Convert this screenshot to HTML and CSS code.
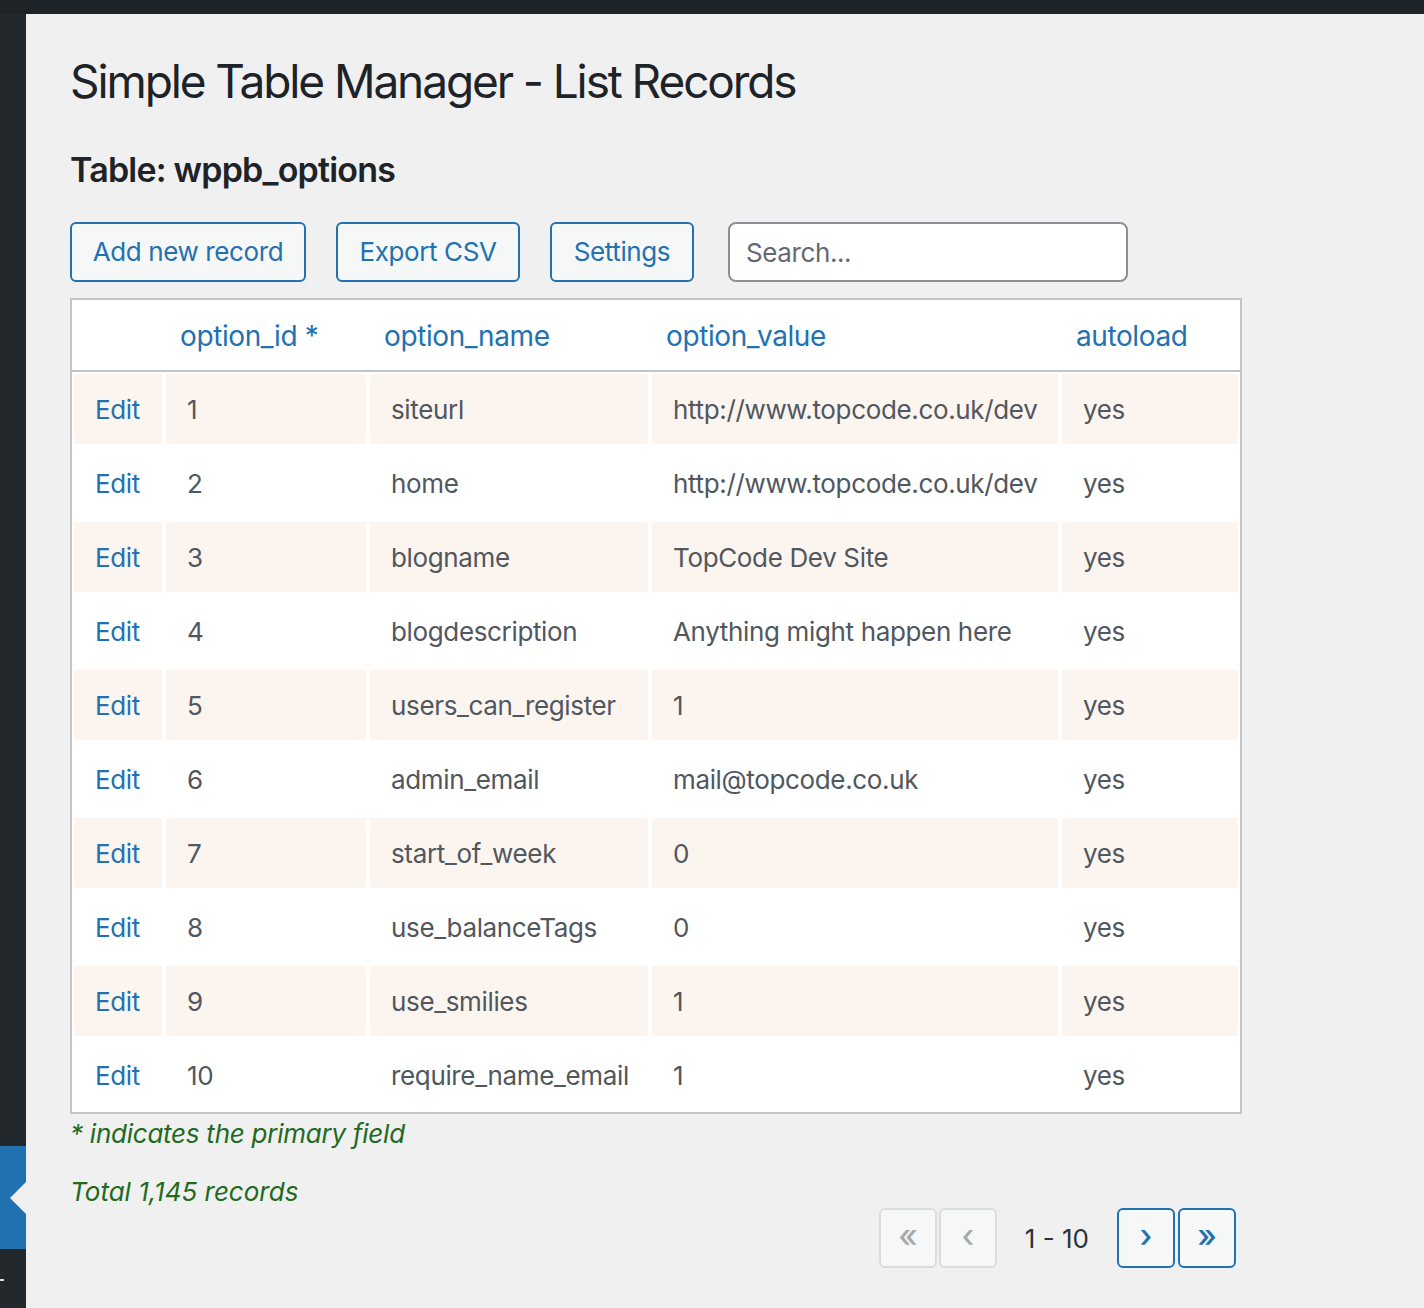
FILE: index.html
```html
<!DOCTYPE html>
<html lang="en">
<head>
<meta charset="utf-8">
<title>Simple Table Manager - List Records</title>
<link rel="stylesheet" href="styles.css">
</head>
<body>
<div class="topbar"></div>
<div class="layout">
  <aside class="sidebar">
    <div class="menu-current"><span class="menu-arrow"></span></div>
    <div class="menu-mark"></div>
  </aside>
  <main class="content">
    <h1 class="page-title">Simple Table Manager - List Records</h1>
    <h2 class="table-title">Table: wppb_options</h2>
    <div class="toolbar">
      <button class="btn btn-add">Add new record</button>
      <button class="btn btn-export">Export CSV</button>
      <button class="btn btn-settings">Settings</button>
      <input class="search" type="text" placeholder="Search...">
    </div>
    <div class="records">
      <div class="row head">
        <div class="th"></div>
        <div class="th">option_id *</div>
        <div class="th">option_name</div>
        <div class="th">option_value</div>
        <div class="th">autoload</div>
      </div>
      <div class="body">
        <div class="row alt"><div class="td edit">Edit</div><div class="td">1</div><div class="td">siteurl</div><div class="td">http://www.topcode.co.uk/dev</div><div class="td">yes</div></div>
        <div class="row"><div class="td edit">Edit</div><div class="td">2</div><div class="td">home</div><div class="td">http://www.topcode.co.uk/dev</div><div class="td">yes</div></div>
        <div class="row alt"><div class="td edit">Edit</div><div class="td">3</div><div class="td">blogname</div><div class="td">TopCode Dev Site</div><div class="td">yes</div></div>
        <div class="row"><div class="td edit">Edit</div><div class="td">4</div><div class="td">blogdescription</div><div class="td">Anything might happen here</div><div class="td">yes</div></div>
        <div class="row alt"><div class="td edit">Edit</div><div class="td">5</div><div class="td">users_can_register</div><div class="td">1</div><div class="td">yes</div></div>
        <div class="row"><div class="td edit">Edit</div><div class="td">6</div><div class="td">admin_email</div><div class="td">mail@topcode.co.uk</div><div class="td">yes</div></div>
        <div class="row alt"><div class="td edit">Edit</div><div class="td">7</div><div class="td">start_of_week</div><div class="td">0</div><div class="td">yes</div></div>
        <div class="row"><div class="td edit">Edit</div><div class="td">8</div><div class="td">use_balanceTags</div><div class="td">0</div><div class="td">yes</div></div>
        <div class="row alt"><div class="td edit">Edit</div><div class="td">9</div><div class="td">use_smilies</div><div class="td">1</div><div class="td">yes</div></div>
        <div class="row"><div class="td edit">Edit</div><div class="td">10</div><div class="td">require_name_email</div><div class="td">1</div><div class="td">yes</div></div>
      </div>
    </div>
    <p class="note">* indicates the primary field</p>
    <p class="note total">Total 1,145 records</p>
    <div class="pager">
      <span class="pg disabled">&laquo;</span>
      <span class="pg disabled gap-s">&lsaquo;</span>
      <span class="pg-label">1 - 10</span>
      <span class="pg active">&rsaquo;</span>
      <span class="pg active gap-m">&raquo;</span>
    </div>
  </main>
</div>
</body>
</html>
```

FILE: styles.css
```css
html, body {
  margin: 0;
  padding: 0;
  background: #f0f0f1;
  font-family: Inter, "Noto Sans", sans-serif;
  color: #3c434a;
}

.topbar {
  height: 14px;
  background: #1d2327;
}

.layout {
  display: flex;
  min-height: 1294px;
}

.sidebar {
  width: 26px;
  flex: none;
  background: #23282d;
  display: flex;
  flex-direction: column;
}

.menu-current {
  position: relative;
  margin-top: 1132px;
  height: 103px;
  background: #2271b1;
}

.menu-arrow {
  position: absolute;
  right: 0;
  top: 36px;
  width: 0;
  height: 0;
  border-top: 16px solid transparent;
  border-bottom: 16px solid transparent;
  border-right: 16px solid #f0f0f1;
}

.menu-mark {
  margin-top: 30px;
  width: 4px;
  height: 2px;
  background: #dcdcde;
}

.content {
  flex: 1;
  padding: 40px 0 0 44px;
}

.page-title {
  margin: 0;
  font-size: 46px;
  font-weight: 400;
  line-height: 55px;
  color: #1d2327;
  letter-spacing: -2.1px;
}

.table-title {
  margin: 41px 0 0;
  font-size: 34px;
  font-weight: 600;
  line-height: 40px;
  color: #1d2327;
  letter-spacing: -0.8px;
}

.toolbar {
  display: flex;
  align-items: center;
  margin-top: 32px;
  height: 60px;
}

.btn {
  box-sizing: border-box;
  height: 60px;
  padding: 0;
  margin-right: 30px;
  border: 2px solid #2271b1;
  border-radius: 6px;
  background: #f6f7f7;
  color: #2271b1;
  font-family: inherit;
  font-size: 26px;
  line-height: 56px;
  letter-spacing: -0.4px;
  text-align: center;
}

.btn-add { width: 236px; }
.btn-export { width: 184px; }
.btn-settings { width: 144px; margin-right: 34px; }

.search {
  box-sizing: border-box;
  width: 400px;
  height: 60px;
  padding: 0 16px;
  border: 2px solid #8c8f94;
  border-radius: 8px;
  background: #fff;
  font-family: inherit;
  font-size: 26px;
  letter-spacing: -0.4px;
  color: #2c3338;
}

.search::placeholder {
  color: #646970;
}

.records {
  width: 1168px;
  margin-top: 16px;
  border: 2px solid #c3c4c7;
  background: #fff;
}

.row {
  display: grid;
  grid-template-columns: 88px 200px 278px 406px 176px;
  column-gap: 4px;
  padding: 0 2px;
}

.head {
  height: 70px;
  border-bottom: 2px solid #c3c4c7;
}

.th {
  display: flex;
  align-items: center;
  padding-left: 14px;
  padding-top: 2px;
  font-size: 28px;
  letter-spacing: -0.4px;
  color: #2271b1;
}

.body {
  display: flex;
  flex-direction: column;
  gap: 4px;
  padding: 2px 0;
}

.td {
  display: flex;
  align-items: center;
  height: 70px;
  padding-left: 21px;
  font-size: 26px;
  letter-spacing: -0.35px;
  color: #50575e;
  white-space: nowrap;
}

.alt .td {
  background: #fcf5ef;
}

.td.edit {
  color: #2271b1;
}

.note {
  margin: 0;
  font-size: 26px;
  font-style: italic;
  line-height: 39px;
  letter-spacing: -0.25px;
  color: #226a1e;
}

.total {
  margin-top: 25px;
  line-height: 28px;
  letter-spacing: 0;
}

.pager {
  display: flex;
  align-items: center;
  justify-content: flex-end;
  width: 1166px;
  margin-top: 2px;
}

.pg {
  box-sizing: border-box;
  width: 58px;
  height: 60px;
  display: flex;
  align-items: center;
  justify-content: center;
  border: 2px solid #dcdcde;
  border-radius: 6px;
  background: #f6f7f7;
  font-size: 32px;
  font-weight: 500;
  line-height: 1;
  padding-bottom: 4px;
}

.pg.disabled {
  color: #a7aaad;
}

.pg.active {
  border-color: #2271b1;
  color: #2271b1;
}

.gap-s {
  margin-left: 2px;
}

.gap-m {
  margin-left: 3px;
}

.pg-label {
  margin: 0 28px 0 28px;
  font-size: 26px;
  color: #2c3338;
}
```
